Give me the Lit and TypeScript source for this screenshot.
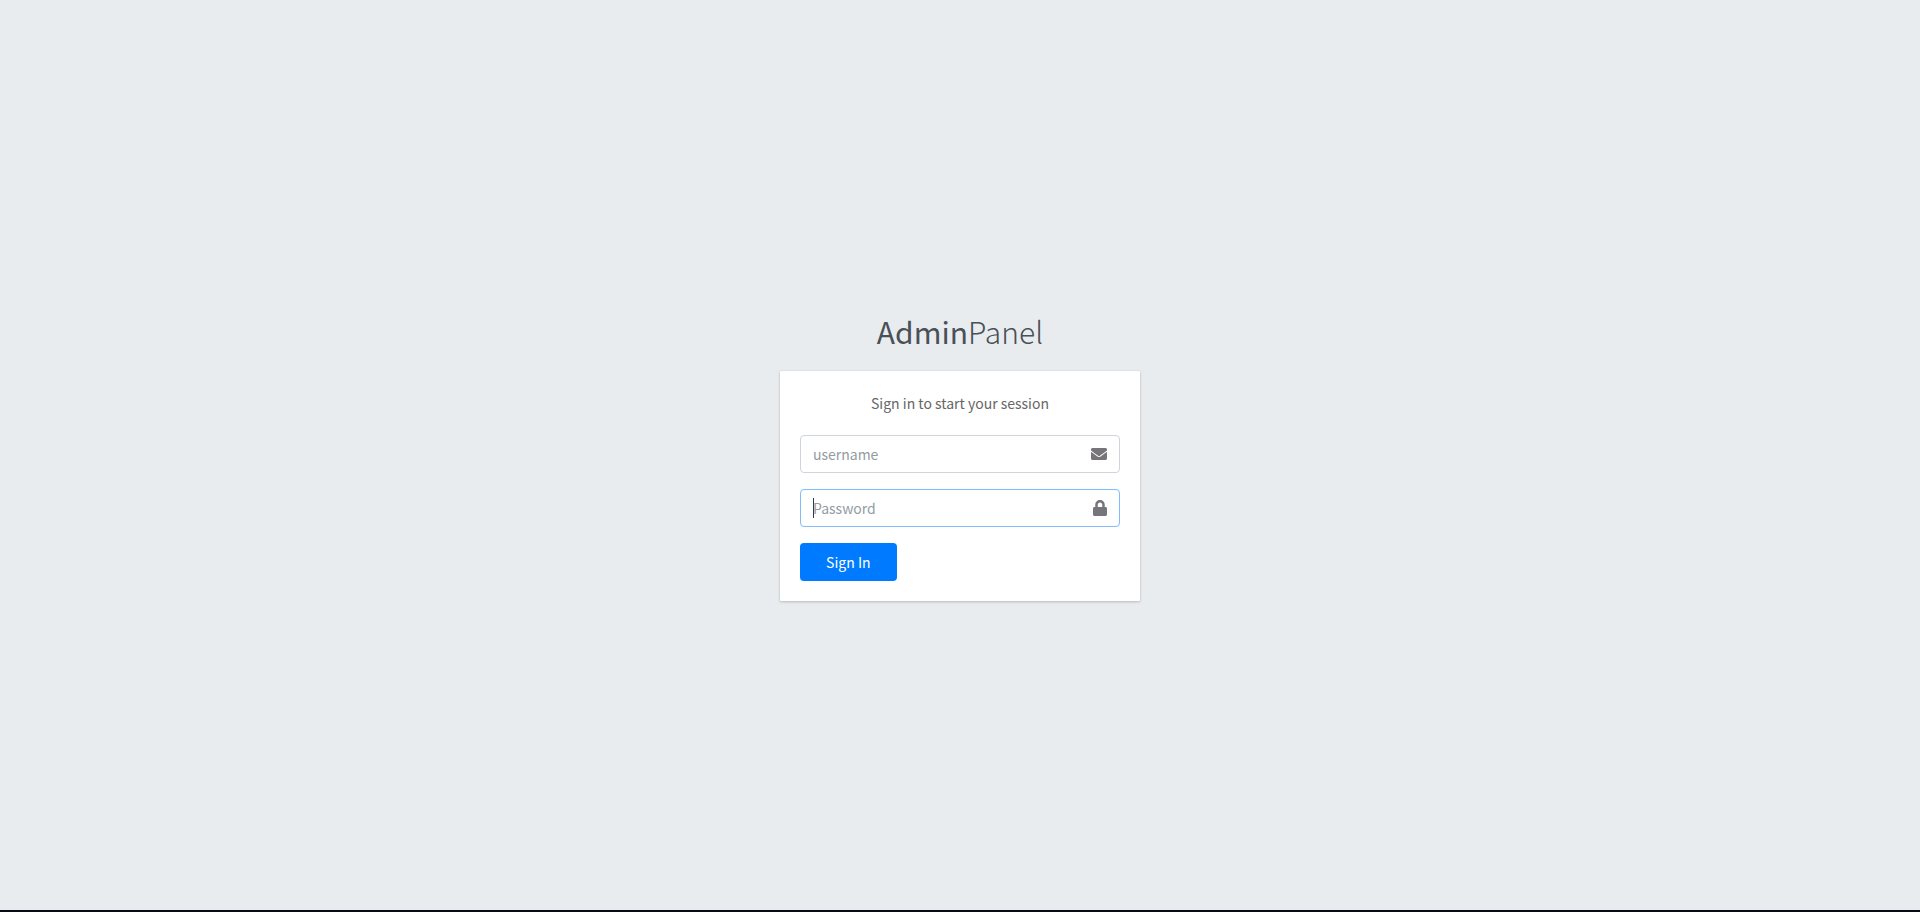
import { LitElement, html, css } from "lit";
import { customElement, query } from "lit/decorators.js";

@customElement("app-root")
export class AppRoot extends LitElement {
  static styles = css`
    :host {
      display: flex;
      flex-direction: column;
      min-height: 100vh;
      box-sizing: border-box;
      background: #e9ecef;
      border-bottom: 2px solid #070b14;
      color: #495057;
      font-family: "Source Sans Pro", "Noto Sans CJK JP", "Noto Sans", sans-serif;
      font-size: 14px;
      line-height: 24px;
    }
    *,
    *::before,
    *::after {
      box-sizing: border-box;
    }
    .page {
      flex: 1;
      display: flex;
      flex-direction: column;
      align-items: center;
      justify-content: center;
      padding-bottom: 3px;
    }
    .box {
      width: 360px;
      max-width: 90%;
    }
    .logo {
      margin: 0 0 15px;
      font-size: 30px;
      line-height: 50px;
      font-weight: 200;
      text-align: center;
    }
    .logo a {
      color: #495057;
      text-decoration: none;
    }
    .logo b {
      font-weight: 400;
    }
    .card {
      display: flex;
      flex-direction: column;
      padding: 20px;
      background: #fff;
      border-radius: 1px;
      box-shadow: 0 0 1px rgba(0, 0, 0, 0.13), 0 1px 3px rgba(0, 0, 0, 0.2);
    }
    .message {
      margin: 0 0 20px;
      color: #666;
      text-align: center;
    }
    form {
      display: grid;
      gap: 16px;
    }
    .field {
      display: flex;
      align-items: center;
      height: 38px;
      padding-right: 12px;
      border: 1px solid #ced4da;
      border-radius: 4px;
      background: #fff;
    }
    .field:focus-within {
      border-color: #80bdff;
    }
    .field input {
      flex: 1;
      min-width: 0;
      height: 36px;
      padding: 0 12px;
      border: 0;
      outline: 0;
      background: transparent;
      color: #495057;
      font: inherit;
    }
    .field input::placeholder {
      color: #939ba2;
      opacity: 1;
    }
    .field input:focus:placeholder-shown {
      caret-color: transparent;
      background: linear-gradient(#343a40, #343a40) 12px 8px / 1px 20px no-repeat;
    }
    .icon {
      display: block;
      height: 16px;
      fill: #77757a;
    }
    .actions {
      display: grid;
      grid-template-columns: repeat(3, 1fr);
      gap: 15px;
    }
    .submit {
      height: 38px;
      padding: 0;
      border: 0;
      border-radius: 4px;
      background: #007bff;
      color: #fff;
      font: inherit;
      cursor: pointer;
    }
  `;

  @query("#password") private password!: HTMLInputElement;

  firstUpdated() {
    this.password.focus();
  }

  private onSubmit(event: Event) {
    event.preventDefault();
  }

  render() {
    return html`
      <main class="page">
        <div class="box">
          <h1 class="logo"><a href="#"><b>Admin</b>Panel</a></h1>
          <section class="card">
            <p class="message">Sign in to start your session</p>
            <form @submit=${this.onSubmit}>
              <div class="field">
                <input id="username" type="text" placeholder="username" />
                <label for="username">
                  <svg class="icon" viewBox="0 0 512 512" role="img" aria-label="username">
                    <path
                      d="M502.3 190.8c3.9-3.1 9.7-.2 9.7 4.7V400c0 26.5-21.5 48-48 48H48c-26.5 0-48-21.5-48-48V195.6c0-5 5.7-7.8 9.7-4.7 22.4 17.4 52.1 39.5 154.1 113.6 21.1 15.4 56.7 47.8 92.2 47.6 35.7.3 72-32.8 92.3-47.6 102-74.1 131.6-96.3 154-113.7zM256 320c23.2.4 56.6-29.2 73.4-41.4 132.7-96.3 142.8-104.7 173.4-128.7 5.8-4.5 9.2-11.5 9.2-18.9v-19c0-26.5-21.5-48-48-48H48c-26.5 0-48 21.5-48 48v19c0 7.4 3.4 14.3 9.2 18.9 30.6 23.9 40.7 32.4 173.4 128.7 16.8 12.2 50.2 41.8 73.4 41.4z"
                    />
                  </svg>
                </label>
              </div>
              <div class="field">
                <input id="password" type="password" placeholder="Password" />
                <label for="password">
                  <svg class="icon" viewBox="0 0 448 512" role="img" aria-label="Password">
                    <path
                      d="M400 224h-24v-72C376 68.2 307.8 0 224 0S72 68.2 72 152v72H48c-26.5 0-48 21.5-48 48v192c0 26.5 21.5 48 48 48h352c26.5 0 48-21.5 48-48V272c0-26.5-21.5-48-48-48zm-104 0H152v-72c0-39.7 32.3-72 72-72s72 32.3 72 72v72z"
                    />
                  </svg>
                </label>
              </div>
              <div class="actions">
                <button class="submit" type="submit">Sign In</button>
              </div>
            </form>
          </section>
        </div>
      </main>
    `;
  }
}
